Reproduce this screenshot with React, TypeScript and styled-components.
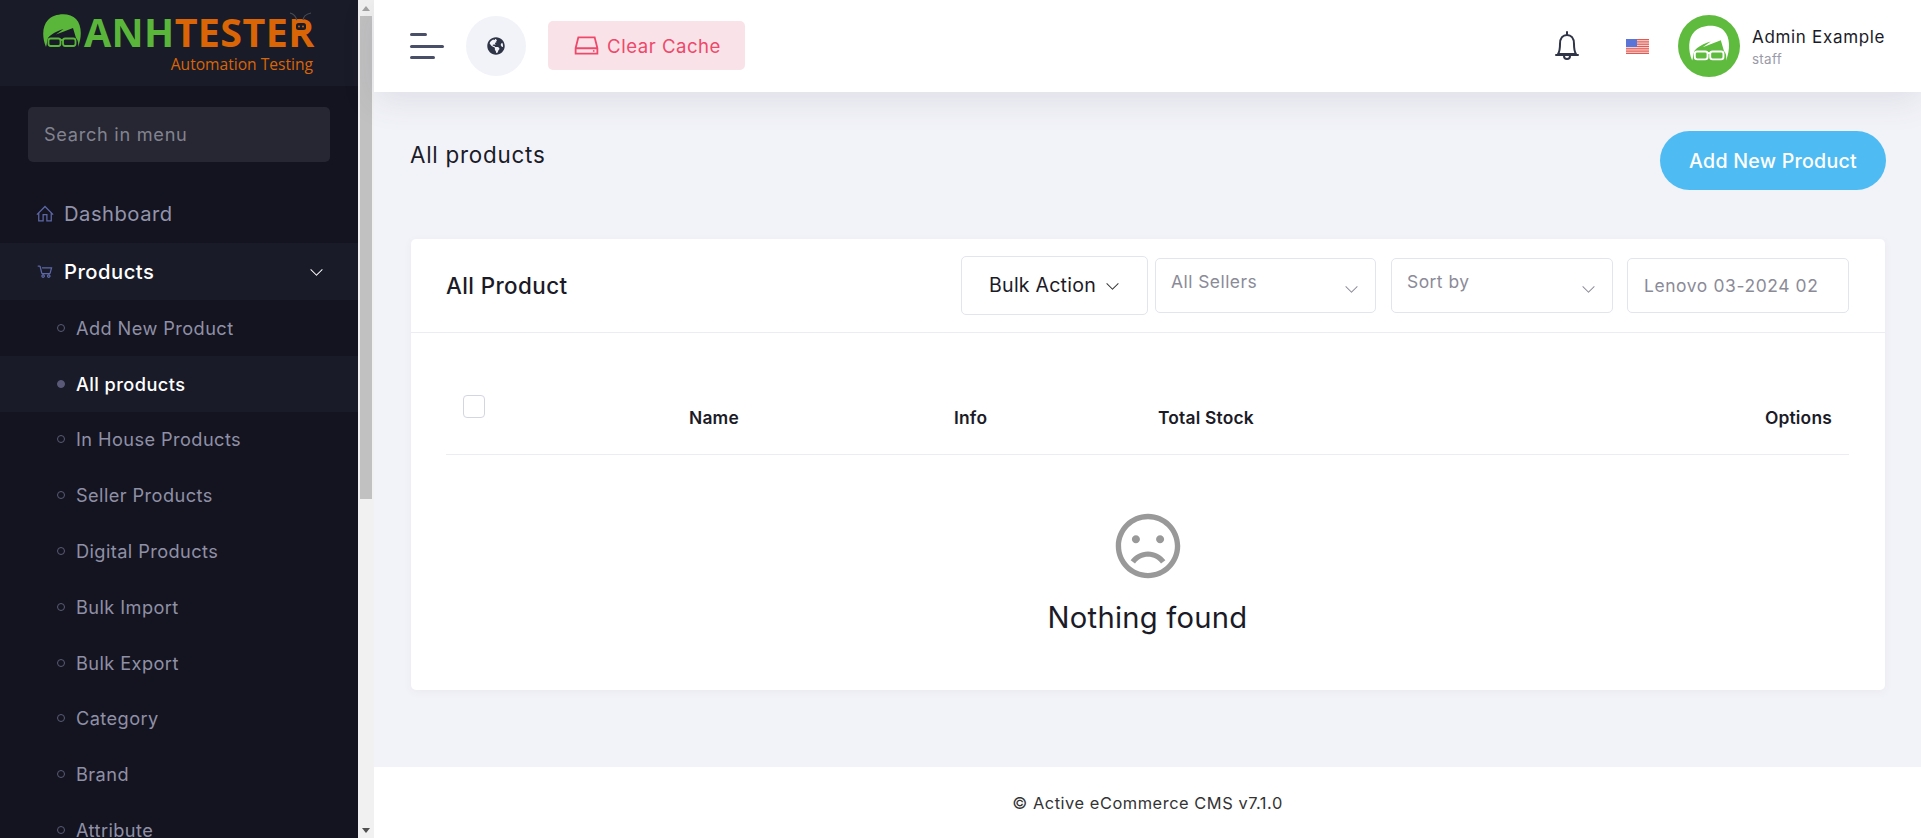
import React from "react";
import styled, { createGlobalStyle } from "styled-components";
import { FaGlobeAmericas } from "react-icons/fa";
import { LiaHddSolid, LiaFrown, LiaHomeSolid, LiaShoppingCartSolid, LiaAngleDownSolid } from "react-icons/lia";

const Global = createGlobalStyle`
  html, body { margin: 0; padding: 0; height: 100%; overflow: hidden; }
  body { font-family: Inter, "Open Sans", sans-serif; background: #f2f3f8; color: #1b1b28; }
  #root { height: 100%; }
  * { box-sizing: border-box; }
`;

const Page = styled.div`display: flex; height: 838px; width: 1921px; overflow: hidden;`;
const Sidebar = styled.aside`width: 358px; flex: none; background: #141420; height: 100%; overflow: hidden;`;
const LogoBar = styled.div`height: 86px; background: #1a1b28; padding: 18px 0 0 43px; position: relative;`;
const LogoRow = styled.div`display: flex; align-items: flex-start; gap: 3px;`;
const LogoFace = styled.svg`width: 38px; height: 34px; margin-top: -4px; flex: none;`;
const LogoWord = styled.div`font-family: "Open Sans", sans-serif; font-weight: 700; font-size: 39.5px; line-height: 28px; letter-spacing: .35px; white-space: nowrap; color: #d96507;`;
const LogoGreen = styled.span`color: #5ab63a;`;
const LogoSub = styled.div`font-family: "Open Sans", sans-serif; font-size: 15.6px; line-height: 20px; color: #d96507; text-align: right; width: 270px; margin-top: 6px;`;
const Bug = styled.svg`position: absolute; left: 288px; top: 11px; width: 24px; height: 24px;`;
const Search = styled.div`margin: 21px 28px 23px; height: 55px; width: 302px; background: #262733; border-radius: 5px; color: #82838f; font-size: 18.2px; line-height: 55px; padding-left: 16px; letter-spacing: .7px;`;
const MainItem = styled.div<{ $open?: boolean }>`
  height: ${p => (p.$open ? 57 : 58)}px; display: flex; align-items: center; padding: 0 34px 1px 36px;
  background: ${p => (p.$open ? "#1a1b28" : "transparent")};
  color: ${p => (p.$open ? "#fff" : "#9394ac")}; font-size: 20.2px; letter-spacing: .5px;
  font-weight: ${p => (p.$open ? 500 : 400)};
`;
const MainIcon = styled.span`width: 28px; display: flex; color: #5c67a6; font-size: 20px; margin-left: -1px; margin-right: 1px;`;
const MainLabel = styled.span`flex: 1;`;
const Caret = styled.span`display: flex; color: #fff; font-size: 15px;`;
const SubItem = styled.div<{ $active?: boolean }>`
  height: 55.8px; display: flex; align-items: center; padding-left: 57px; gap: 11px;
  background: ${p => (p.$active ? "#1a1b28" : "transparent")};
  color: ${p => (p.$active ? "#fff" : "#8f90a6")}; font-size: 18.2px; letter-spacing: .42px;
  font-weight: ${p => (p.$active ? 500 : 400)};
`;
const Bullet = styled.span<{ $active?: boolean }>`
  width: 8px; height: 8px; border-radius: 50%; flex: none;
  border: 1.5px solid #5a5a78; background: ${p => (p.$active ? "#5a5a78" : "transparent")};
`;
const Rail = styled.div`width: 16px; flex: none; height: 100%; background: #f1f1f1; display: flex; flex-direction: column; align-items: center; justify-content: space-between;`;
const RailArrow = styled.div<{ $down?: boolean }>`
  width: 16px; height: 16px; display: flex; align-items: center; justify-content: center;
  &::before { content: ""; border-left: 4.5px solid transparent; border-right: 4.5px solid transparent;
    ${p => (p.$down ? "border-top: 5px solid #505050;" : "border-bottom: 5px solid #a3a3a3;")} }
`;
const RailTrack = styled.div`flex: 1; width: 100%; display: flex; justify-content: center;`;
const RailThumb = styled.div`width: 12px; height: 483px; background: #c1c1c1;`;

const Main = styled.div`flex: 1; min-width: 0; display: flex; flex-direction: column; height: 100%;`;
const Header = styled.header`height: 92px; flex: none; background: #fff; display: flex; align-items: center; padding: 0 35px 0 36px; box-shadow: 0 8px 34px rgba(82, 63, 105, .12); position: relative; z-index: 1;`;
const Burger = styled.div`width: 34px; display: flex; flex-direction: column; gap: 8.5px; margin-right: 22px;`;
const BurgerLine = styled.span<{ $w: number }>`display: block; height: 3px; width: ${p => p.$w}px; background: #4a4f68; border-radius: 2px;`;
const GlobeButton = styled.div`width: 60px; height: 60px; border-radius: 50%; background: #f2f3f8; display: flex; align-items: center; justify-content: center; color: #2f3547; font-size: 18px; margin-right: 22px;`;
const CacheButton = styled.div`width: 197px; height: 49px; margin-top: -1px; border-radius: 5px; background: #f9e3e9; color: #ef486a; display: flex; align-items: center; justify-content: center; gap: 6px; font-size: 18.6px; letter-spacing: .5px; font-weight: 400;`;
const CacheIcon = styled.span`display: flex; font-size: 29px;`;
const Spacer = styled.div`flex: 1;`;
const Bell = styled.svg`width: 24px; height: 30px; margin-right: 47px; flex: none;`;
const Flag = styled.svg`width: 23px; height: 15px; margin-right: 29px; flex: none; filter: blur(.3px);`;
const Avatar = styled.svg`width: 62px; height: 62px; flex: none; margin-right: 12px;`;
const UserBox = styled.div`display: flex; flex-direction: column; margin-top: 2px; width: 134px;`;
const UserName = styled.div`font-size: 17px; line-height: 24px; color: #1b1b28; letter-spacing: .68px; font-weight: 400; white-space: nowrap;`;
const UserRole = styled.div`font-size: 13.4px; line-height: 20px; color: #9a9aa8; letter-spacing: .3px;`;

const Content = styled.main`flex: 1; padding: 39px 36px 0 37px;`;
const PageHead = styled.div`display: flex; justify-content: space-between; align-items: flex-start; height: 59px; margin: 0 -1px 49px -1px;`;
const PageTitle = styled.h1`margin: 0; font-size: 22.4px; line-height: 48px; font-weight: 400; color: #1b1b28; letter-spacing: .75px;`;
const AddButton = styled.div`width: 226px; height: 59px; border-radius: 30px; background: #4fbbf3; color: #fff; font-size: 19.6px; font-weight: 500; display: flex; align-items: center; justify-content: center; letter-spacing: .25px;`;

const Card = styled.section`height: 451px; background: #fff; border-radius: 5px; box-shadow: 0 2px 8px rgba(82, 63, 105, .05);`;
const CardHead = styled.div`height: 94px; border-bottom: 1px solid #ebedf2; display: flex; align-items: center; padding: 0 36px 1px 35px;`;
const CardTitle = styled.h2`flex: 1; margin: 0; font-size: 22.4px; font-weight: 500; color: #1b1b28; letter-spacing: .4px;`;
const BulkButton = styled.div`width: 187px; height: 59px; border: 1px solid #e2e5ec; border-radius: 5px; display: flex; align-items: center; justify-content: center; gap: 9px; font-size: 19.6px; color: #1b1b28; margin-right: 7px; letter-spacing: .2px;`;
const BulkCaret = styled.span`display: flex; font-size: 15px; color: #333;`;
const SelectBox = styled.div<{ $gap: number; $width: number }>`width: ${p => p.$width}px; height: 55px; border: 1px solid #e2e5ec; border-radius: 5px; display: flex; align-items: flex-start; justify-content: space-between; padding: 11px 16px 11px 15px; color: #8b8b98; font-size: 17.4px; line-height: 24px; margin-right: ${p => p.$gap}px; letter-spacing: .48px;`;
const SelectCaret = styled.span`display: flex; font-size: 15px; color: #8b8b98; margin-top: 11px;`;
const SearchInput = styled.div`width: 222px; height: 55px; border: 1px solid #e2e5ec; border-radius: 5px; display: flex; align-items: center; padding-left: 16px; color: #8b8b98; font-size: 17.4px; letter-spacing: .62px; white-space: nowrap;`;

const TableWrap = styled.div`padding: 0 36px 0 35px;`;
const TableHead = styled.div`height: 122px; border-bottom: 1px solid #ebedf2; display: grid; grid-template-columns: 226px 265px 204px 1fr auto; padding: 0 17px; font-size: 17.4px; font-weight: 600; color: #1b1b28; line-height: 24px; align-items: start;`;
const Cell = styled.div`padding-top: 73px; letter-spacing: .2px;`;
const Check = styled.div`width: 22px; height: 23px; margin-top: 62px; border: 1px solid #d3d6e2; border-radius: 4px; background: #fff;`;
const Empty = styled.div`display: flex; flex-direction: column; align-items: center; padding-top: 49px; color: #1b1b28;`;
const Frown = styled.div`display: flex; font-size: 86px; color: #999; height: 84px; align-items: center;`;
const EmptyText = styled.div`font-size: 29.2px; line-height: 42px; margin-top: 9px; letter-spacing: .25px;`;
const Footer = styled.footer`height: 71px; flex: none; background: #fff; display: flex; align-items: center; justify-content: center; font-size: 16.4px; color: #333; letter-spacing: .55px;`;

const Face: React.FC<{ hair: string; glass: string; x?: number; y?: number; s?: number }> = ({ hair, glass, x = 0, y = 0, s = 1 }) => (
  <g transform={`translate(${x} ${y}) scale(${s})`}>
    <path fill={hair} d="M3 33C-1 24-1 12 5 6C11-1 27-2 33 5C39 11 39 23 35 33C35.5 29 35 26 33 24L30 14L13 20.5L20.5 15C14 17 8 20 5 24C4 27 4 30 3 33Z" />
    <rect x="5.5" y="24.5" width="12" height="7.5" rx="2.2" fill="none" stroke={glass} strokeWidth="1.8" />
    <rect x="20" y="24.5" width="12.5" height="7.5" rx="2.2" fill="none" stroke={glass} strokeWidth="1.8" />
    <path d="M17.5 26H20" stroke={glass} strokeWidth="1.8" />
  </g>
);

const subItems = ["Add New Product", "All products", "In House Products", "Seller Products", "Digital Products", "Bulk Import", "Bulk Export", "Category", "Brand", "Attribute"];

export default function App() {
  return (
    <Page>
      <Global />
      <Sidebar>
        <LogoBar>
          <LogoRow>
            <LogoFace viewBox="0 0 38 34"><Face hair="#5ab63a" glass="#5ab63a" /></LogoFace>
            <LogoWord><LogoGreen>ANH</LogoGreen>TESTER</LogoWord>
          </LogoRow>
          <LogoSub>Automation Testing</LogoSub>
          <Bug viewBox="0 0 24 24">
            <path d="M9 10C8 5 6 3 2 2M15 10C15 5 18 3 23 2" fill="none" stroke="#4a4a52" strokeWidth="1.1" />
            <rect x="6" y="9" width="14" height="12" rx="4" fill="#d96507" />
            <rect x="8" y="12" width="10" height="7" rx="2.5" fill="#1a1b28" />
            <circle cx="11" cy="15.5" r=".9" fill="#d96507" />
            <circle cx="15" cy="15.5" r=".9" fill="#d96507" />
          </Bug>
        </LogoBar>
        <Search>Search in menu</Search>
        <MainItem>
          <MainIcon><LiaHomeSolid /></MainIcon>
          <MainLabel>Dashboard</MainLabel>
        </MainItem>
        <MainItem $open>
          <MainIcon><LiaShoppingCartSolid /></MainIcon>
          <MainLabel>Products</MainLabel>
          <Caret><LiaAngleDownSolid /></Caret>
        </MainItem>
        {subItems.map((t, i) => (
          <SubItem key={t} $active={i === 1}>
            <Bullet $active={i === 1} />
            {t}
          </SubItem>
        ))}
      </Sidebar>
      <Rail>
        <RailArrow />
        <RailTrack><RailThumb /></RailTrack>
        <RailArrow $down />
      </Rail>
      <Main>
        <Header>
          <Burger>
            <BurgerLine $w={17} />
            <BurgerLine $w={34} />
            <BurgerLine $w={25} />
          </Burger>
          <GlobeButton><FaGlobeAmericas /></GlobeButton>
          <CacheButton>
            <CacheIcon><LiaHddSolid /></CacheIcon>
            Clear Cache
          </CacheButton>
          <Spacer />
          <Bell viewBox="0 0 24 30" fill="none" stroke="#2f3547" strokeWidth="2">
            <path d="M3 23C5 20 5 17 5 13C5 7 8 4 12 4C16 4 19 7 19 13C19 17 19 20 21 23Z" strokeLinejoin="round" />
            <path d="M1 24H23M12 1V4M9 25C9 29 15 29 15 25" strokeLinecap="round" />
          </Bell>
          <Flag viewBox="0 0 23 15">
            <rect width="23" height="15" fill="#f6dcdc" />
            {[0, 2.3, 4.6, 6.9, 9.2, 11.5, 13.8].map(y => <rect key={y} y={y} width="23" height="1.2" fill="#e4584f" />)}
            <rect width="11" height="8" fill="#5b74d8" />
          </Flag>
          <Avatar viewBox="0 0 62 62">
            <circle cx="31" cy="31" r="31" fill="#5fbb3e" />
            <Face hair="#fff" glass="#fff" x={11} y={10.5} s={1.06} />
          </Avatar>
          <UserBox>
            <UserName>Admin Example</UserName>
            <UserRole>staff</UserRole>
          </UserBox>
        </Header>
        <Content>
          <PageHead>
            <PageTitle>All products</PageTitle>
            <AddButton>Add New Product</AddButton>
          </PageHead>
          <Card>
            <CardHead>
              <CardTitle>All Product</CardTitle>
              <BulkButton>Bulk Action<BulkCaret><LiaAngleDownSolid /></BulkCaret></BulkButton>
              <SelectBox $gap={15} $width={221}>All Sellers<SelectCaret><LiaAngleDownSolid /></SelectCaret></SelectBox>
              <SelectBox $gap={14} $width={222}>Sort by<SelectCaret><LiaAngleDownSolid /></SelectCaret></SelectBox>
              <SearchInput>Lenovo 03-2024 02</SearchInput>
            </CardHead>
            <TableWrap>
              <TableHead>
                <Check />
                <Cell>Name</Cell>
                <Cell>Info</Cell>
                <Cell>Total Stock</Cell>
                <Cell>Options</Cell>
              </TableHead>
              <Empty>
                <Frown><LiaFrown /></Frown>
                <EmptyText>Nothing found</EmptyText>
              </Empty>
            </TableWrap>
          </Card>
        </Content>
        <Footer>© Active eCommerce CMS v7.1.0</Footer>
      </Main>
    </Page>
  );
}
